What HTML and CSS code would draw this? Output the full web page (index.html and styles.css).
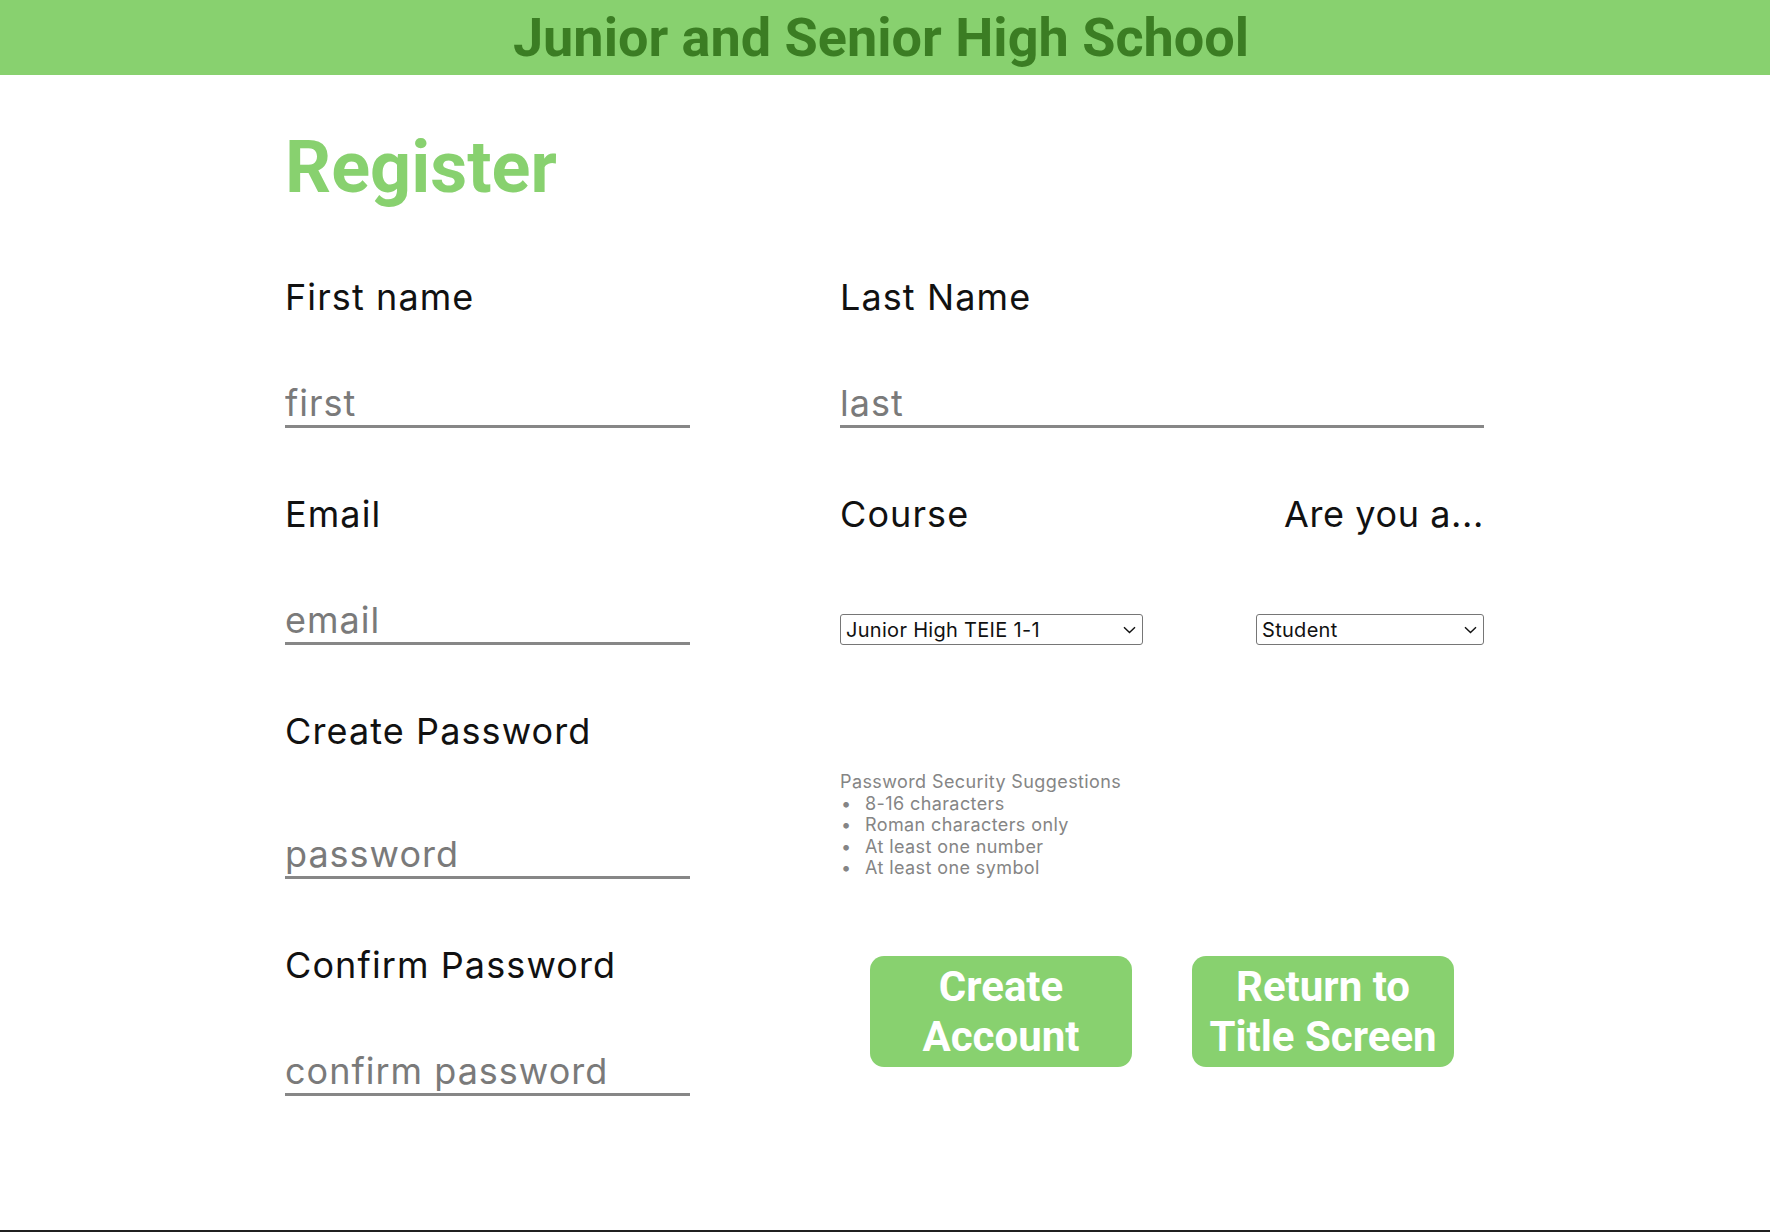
FILE: index.html
```html
<!DOCTYPE html>
<html lang="en">
<head>
<meta charset="utf-8">
<title>Register</title>
<link rel="stylesheet" href="styles.css">
</head>
<body>
<header class="topbar">
  <h1 class="school">Junior and Senior High School</h1>
</header>
<main class="page">
  <h2 class="title">Register</h2>
  <form class="form">
    <div class="field">
      <label class="label" for="first">First name</label>
      <input class="input" id="first" type="text" placeholder="first">
    </div>
    <div class="field">
      <label class="label" for="last">Last Name</label>
      <input class="input" id="last" type="text" placeholder="last">
    </div>

    <div class="field">
      <label class="label" for="email">Email</label>
      <input class="input" id="email" type="email" placeholder="email">
    </div>
    <div class="field">
      <div class="label-row">
        <label class="label" for="course">Course</label>
        <label class="label label-tight" for="role">Are you a...</label>
      </div>
      <div class="select-row">
        <span class="select-wrap select-course">
          <select class="select" id="course">
            <option>Junior High TEIE 1-1</option>
          </select>
          <svg class="chev" width="13" height="8" viewBox="0 0 13 8" aria-hidden="true"><path d="M1 1.2 L6.5 6.6 L12 1.2" fill="none" stroke="#111" stroke-width="1.4"/></svg>
        </span>
        <span class="select-wrap select-role">
          <select class="select" id="role">
            <option>Student</option>
          </select>
          <svg class="chev" width="13" height="8" viewBox="0 0 13 8" aria-hidden="true"><path d="M1 1.2 L6.5 6.6 L12 1.2" fill="none" stroke="#111" stroke-width="1.4"/></svg>
        </span>
      </div>
    </div>

    <div class="field field-tall">
      <label class="label" for="pw">Create Password</label>
      <input class="input" id="pw" type="password" placeholder="password">
    </div>
    <div class="tips">
      <p class="tips-title">Password Security Suggestions</p>
      <ul class="tips-list">
        <li>8-16 characters</li>
        <li>Roman characters only</li>
        <li>At least one number</li>
        <li>At least one symbol</li>
      </ul>
    </div>

    <div class="field">
      <label class="label" for="pw2">Confirm Password</label>
      <input class="input" id="pw2" type="password" placeholder="confirm password">
    </div>
    <div class="actions">
      <button class="btn" type="submit">Create<br>Account</button>
      <button class="btn" type="button">Return to<br>Title Screen</button>
    </div>
  </form>
</main>
<footer class="bottombar"></footer>
</body>
</html>
```

FILE: styles.css
```css
html, body {
  margin: 0;
  padding: 0;
}

body {
  min-height: 100vh;
  display: flex;
  flex-direction: column;
  background: #ffffff;
  font-family: "Inter", "Liberation Sans", sans-serif;
  color: #111111;
}

.topbar {
  height: 75px;
  background: #88d16f;
  display: flex;
  align-items: center;
  justify-content: center;
  padding-right: 8px;
}

.school {
  margin: 0;
  font-family: "Roboto", "Liberation Sans", sans-serif;
  font-weight: 700;
  font-size: 54px;
  line-height: 75px;
  color: #3b7d23;
}

.page {
  width: 1200px;
  margin: 0 auto;
  padding-top: 50px;
  flex: 1;
}

.title {
  margin: 0;
  font-family: "Roboto", "Liberation Sans", sans-serif;
  font-weight: 700;
  font-size: 72px;
  line-height: 86px;
  color: #88d16f;
}

.form {
  margin-top: 66px;
  display: grid;
  grid-template-columns: 405px 644px;
  column-gap: 150px;
  row-gap: 66px;
}

.field {
  display: flex;
  flex-direction: column;
  justify-content: space-between;
}

.label {
  display: block;
  font-size: 36px;
  line-height: 40px;
  letter-spacing: 1.1px;
  font-weight: 400;
  color: #111111;
}

.label-tight {
  letter-spacing: 0.6px;
}

.input {
  margin-top: 64px;
  height: 44px;
  padding: 0;
  border: 0;
  border-bottom: 3px solid #878787;
  font-family: inherit;
  font-size: 36px;
  line-height: 44px;
  letter-spacing: 1px;
  color: #222222;
  background: transparent;
  outline: none;
}

.field-tall .input {
  margin-top: 81px;
}

.input::placeholder {
  color: #7a7a7a;
}

.label-row {
  display: flex;
  justify-content: space-between;
}

.select-row {
  display: flex;
  justify-content: space-between;
  align-items: flex-end;
}

.select-wrap {
  position: relative;
  display: block;
  height: 31px;
}

.select-course {
  width: 303px;
}

.select-role {
  width: 228px;
}

.select {
  appearance: none;
  -webkit-appearance: none;
  display: block;
  width: 100%;
  height: 31px;
  margin: 0;
  font-family: inherit;
  font-size: 20px;
  letter-spacing: 0.3px;
  color: #111111;
  border: 1px solid #767676;
  border-radius: 3px;
  background: #ffffff;
  padding: 0 24px 0 5px;
}

.chev {
  position: absolute;
  right: 7px;
  top: 12px;
  pointer-events: none;
}

.tips {
  align-self: end;
  color: #858585;
  font-size: 18px;
  line-height: 21.6px;
  letter-spacing: 0.4px;
}

.tips-title {
  margin: 0;
}

.tips-list {
  margin: 0;
  padding: 0;
  list-style: none;
}

.tips-list li {
  display: flex;
}

.tips-list li::before {
  content: "\2022";
  width: 25px;
  flex: none;
  padding-left: 1px;
  box-sizing: border-box;
}

.actions {
  display: flex;
  justify-content: space-around;
  align-items: flex-start;
  padding-top: 11px;
}

.btn {
  width: 262px;
  height: 111px;
  border: 0;
  border-radius: 14px;
  background: #88d16f;
  color: #ffffff;
  font-family: "Roboto", "Liberation Sans", sans-serif;
  font-weight: 700;
  font-size: 42px;
  line-height: 50px;
  padding: 0;
}

.bottombar {
  height: 2px;
  background: #202020;
}
```
